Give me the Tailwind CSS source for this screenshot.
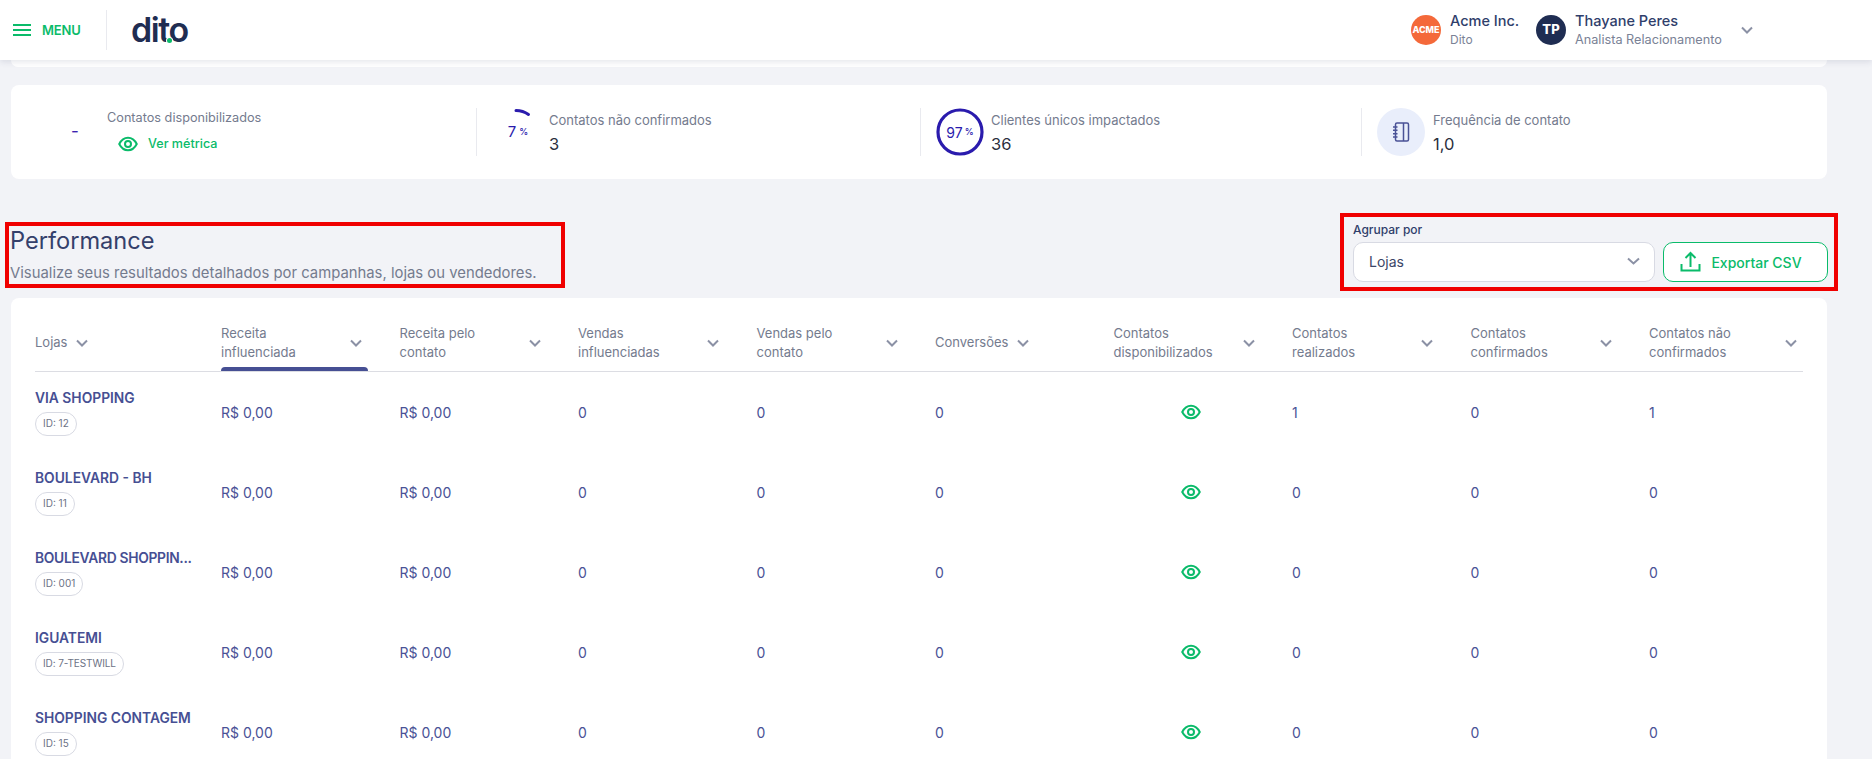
<!DOCTYPE html>
<html lang="pt-BR">
<head>
<meta charset="utf-8">
<script src="https://cdn.jsdelivr.net/npm/@tailwindcss/browser@4"></script>
<title>Performance</title>
</head>
<body class="h-[759px] overflow-hidden bg-[#f2f3f7] font-['Inter','Liberation_Sans',sans-serif]">
<header class="relative z-10 flex h-[60px] items-center bg-white pl-[13px] shadow-[0_2px_6px_rgba(40,50,90,0.12)]">
  <svg class="h-[14px] w-[18px]" viewBox="0 0 18 14" fill="none" stroke="#0abb6a" stroke-width="2"><path d="M0 2h18M0 7h18M0 12h18"/></svg>
  <span class="mt-[1px] ml-[11px] w-[40px] text-[13px] font-semibold tracking-[-0.2px] text-[#0abb6a]">MENU</span>
  <div class="ml-[24px] h-[40px] w-px bg-[#e9eaef]"></div>
  <div class="relative ml-[24px] w-[58px] text-[34px] leading-[34px] font-semibold tracking-[-1.4px] text-[#1f2d52]">dito<span class="absolute top-[25px] left-[36px] h-[5px] w-[5px] rounded-full bg-[#0abb6a] ring-1 ring-white"></span></div>
  <div class="ml-auto flex items-center pr-[119px]">
    <div class="flex h-[30px] w-[30px] items-center justify-center rounded-full bg-[#f4693a] text-[9px] font-extrabold text-white">ACME</div>
    <div class="ml-[9px] w-[86px]">
      <p class="text-[14.5px] leading-[18px] font-medium text-[#2f3e6b]">Acme Inc.</p>
      <p class="mt-[2px] text-[12px] leading-[16px] text-[#7a8296]">Dito</p>
    </div>
    <div class="flex h-[30px] w-[30px] items-center justify-center rounded-full bg-[#1f2d52] text-[13px] font-extrabold text-white">TP</div>
    <div class="ml-[9px] w-[166px]">
      <p class="text-[14.5px] leading-[18px] font-medium text-[#2f3e6b]">Thayane Peres</p>
      <p class="mt-[2px] text-[12.7px] leading-[16px] text-[#7a8296]">Analista Relacionamento</p>
    </div>
    <svg class="h-[8px] w-[12px]" viewBox="0 0 12 8" fill="none" stroke="#8b91a5" stroke-width="2"><path d="M1 1.5l5 5 5-5"/></svg>
  </div>
</header>
<div class="mx-[11px] h-[7px] w-[1816px] rounded-b-lg bg-white"></div>

<section class="mt-[18px] ml-[11px] flex h-[94px] w-[1816px] items-center rounded-lg bg-white">
  <div class="flex h-[48px] w-[465px] items-center">
    <span class="ml-[60px] w-[36px] text-[17px] text-[#3b22b0]">-</span>
    <div class="pb-[3px]">
      <p class="text-[12.7px] leading-[18px] text-[#747b8e]">Contatos disponibilizados</p>
      <div class="mt-[9px] ml-[11px] flex items-center">
        <svg class="h-[16px] w-[20px]" viewBox="0 0 24 18" fill="none" stroke="#0abb6a" stroke-width="2.4"><path d="M1.5 9C4 4 8 1.5 12 1.5S20 4 22.5 9C20 14 16 16.5 12 16.5S4 14 1.5 9z"/><circle cx="12" cy="9" r="3.6"/></svg>
        <span class="ml-[10px] text-[12.6px] leading-[16px] font-medium text-[#0abb6a]">Ver métrica</span>
      </div>
    </div>
  </div>
  <div class="flex h-[48px] w-[444px] items-center border-l border-[#e9eaef]">
    <div class="relative ml-[15px] h-[48px] w-[48px]">
      <svg class="absolute inset-0" viewBox="0 0 48 48" fill="none"><path d="M24 2.5A21.5 21.5 0 0 1 36.5 6.5" stroke="#2a1bad" stroke-width="3" stroke-linecap="round"/></svg>
      <div class="absolute inset-0 flex items-center justify-center pl-[4px] text-[#2a1bad]"><span class="text-[15px]">7</span><span class="ml-[3px] text-[9px] font-medium">%</span></div>
    </div>
    <div class="ml-[9px] pt-[2px]">
      <p class="text-[13px] leading-[18px] text-[#747b8e]">Contatos não confirmados</p>
      <p class="mt-[4px] text-[16.5px] leading-[22px] text-[#2b2f3d]">3</p>
    </div>
  </div>
  <div class="flex h-[48px] w-[441px] items-center border-l border-[#e9eaef]">
    <div class="relative ml-[15px] h-[48px] w-[48px]">
      <svg class="absolute inset-0" viewBox="0 0 48 48" fill="none"><circle cx="24" cy="24" r="22" stroke="#2a1bad" stroke-width="3.2"/></svg>
      <div class="absolute inset-0 flex items-center justify-center text-[#2a1bad]"><span class="text-[14px]">97</span><span class="ml-[2px] text-[9px] font-medium">%</span></div>
    </div>
    <div class="ml-[7px] pt-[2px]">
      <p class="text-[13px] leading-[18px] text-[#747b8e]">Clientes únicos impactados</p>
      <p class="mt-[4px] text-[16.5px] leading-[22px] text-[#2b2f3d]">36</p>
    </div>
  </div>
  <div class="flex h-[48px] items-center border-l border-[#e9eaef]">
    <div class="ml-[15px] flex h-[48px] w-[48px] items-center justify-center rounded-full bg-[#e9eefb]">
      <svg class="h-[20px] w-[18px]" viewBox="0 0 18 20" fill="none" stroke="#4a5296" stroke-width="1.5"><rect x="3.5" y="1" width="13" height="18" rx="1.5"/><path d="M11.5 1v18M1 5h4.5M1 8.3h4.5M1 11.7h4.5M1 15h4.5"/></svg>
    </div>
    <div class="ml-[8px] pt-[2px]">
      <p class="text-[13px] leading-[18px] text-[#747b8e]">Frequência de contato</p>
      <p class="mt-[4px] text-[16.5px] leading-[22px] text-[#2b2f3d]">1,0</p>
    </div>
  </div>
</section>

<section class="mt-[34px] flex items-start justify-between pr-[34px] pl-[5px]">
  <div class="mt-[9px] h-[66px] w-[560px] border-4 border-[#f00000] pl-[1px]">
    <h1 class="text-[23.6px] leading-[30px] font-normal text-[#34406b]">Performance</h1>
    <p class="mt-[7px] text-[14.85px] leading-[20px] text-[#747b8e]">Visualize seus resultados detalhados por campanhas, lojas ou vendedores.</p>
  </div>
  <div class="h-[78px] w-[498px] border-4 border-[#f00000] pt-[5px] pl-[9px]">
    <p class="text-[12px] leading-[16px] font-medium text-[#2f3e6b]">Agrupar por</p>
    <div class="mt-[4px] flex gap-[8px]">
      <div class="flex h-[40px] w-[302px] items-center justify-between rounded-[10px] border border-[#d8dae3] bg-white pr-[14px] pb-[2px] pl-[15px]">
        <span class="text-[14px] text-[#3b4668]">Lojas</span>
        <svg class="h-[8px] w-[13px]" viewBox="0 0 13 8" fill="none" stroke="#8b91a5" stroke-width="2"><path d="M1 1.5l5.5 5 5.5-5"/></svg>
      </div>
      <div class="flex h-[40px] w-[165px] items-center justify-center gap-[10px] rounded-[10px] border border-[#0abb6a] bg-white pr-[9px]">
        <svg class="h-[22px] w-[21px]" viewBox="0 0 21 22" fill="none" stroke="#0abb6a" stroke-width="2"><path d="M1.5 13v6.5h18V13M10.5 16V2M5.5 7l5-5 5 5"/></svg>
        <span class="text-[14px] font-medium text-[#0abb6a]">Exportar CSV</span>
      </div>
    </div>
  </div>
</section>

<section class="mt-[7px] ml-[11px] h-[480px] w-[1816px] overflow-hidden rounded-t-lg bg-white pt-[17px] pl-[24px]">
  <div class="grid h-[57px] w-[1768px] grid-cols-[186px_repeat(8,178.5px)_155px] border-b border-[#dcdde3] pb-[1px] text-[13px] leading-[19px] text-[#747b8e]">
    <div class="flex items-center"><span>Lojas</span><svg class="ml-[9px] h-[8px] w-[12px]" viewBox="0 0 12 8" fill="none" stroke="#8b91a5" stroke-width="2"><path d="M1 1.5l5 5 5-5"/></svg></div>
    <div class="relative flex w-[147px] items-center justify-between pr-[6px]"><span>Receita<br>influenciada</span><svg class="h-[8px] w-[12px]" viewBox="0 0 12 8" fill="none" stroke="#8b91a5" stroke-width="2"><path d="M1 1.5l5 5 5-5"/></svg><span class="absolute right-0 bottom-[-1px] left-0 h-[4px] rounded-t-sm bg-[#464f93]"></span></div>
    <div class="flex w-[147px] items-center justify-between pr-[6px]"><span>Receita pelo<br>contato</span><svg class="h-[8px] w-[12px]" viewBox="0 0 12 8" fill="none" stroke="#8b91a5" stroke-width="2"><path d="M1 1.5l5 5 5-5"/></svg></div>
    <div class="flex w-[147px] items-center justify-between pr-[6px]"><span>Vendas<br>influenciadas</span><svg class="h-[8px] w-[12px]" viewBox="0 0 12 8" fill="none" stroke="#8b91a5" stroke-width="2"><path d="M1 1.5l5 5 5-5"/></svg></div>
    <div class="flex w-[147px] items-center justify-between pr-[6px]"><span>Vendas pelo<br>contato</span><svg class="h-[8px] w-[12px]" viewBox="0 0 12 8" fill="none" stroke="#8b91a5" stroke-width="2"><path d="M1 1.5l5 5 5-5"/></svg></div>
    <div class="flex items-center"><span>Conversões</span><svg class="ml-[9px] h-[8px] w-[12px]" viewBox="0 0 12 8" fill="none" stroke="#8b91a5" stroke-width="2"><path d="M1 1.5l5 5 5-5"/></svg></div>
    <div class="flex w-[147px] items-center justify-between pr-[6px]"><span>Contatos<br>disponibilizados</span><svg class="h-[8px] w-[12px]" viewBox="0 0 12 8" fill="none" stroke="#8b91a5" stroke-width="2"><path d="M1 1.5l5 5 5-5"/></svg></div>
    <div class="flex w-[147px] items-center justify-between pr-[6px]"><span>Contatos<br>realizados</span><svg class="h-[8px] w-[12px]" viewBox="0 0 12 8" fill="none" stroke="#8b91a5" stroke-width="2"><path d="M1 1.5l5 5 5-5"/></svg></div>
    <div class="flex w-[147px] items-center justify-between pr-[6px]"><span>Contatos<br>confirmados</span><svg class="h-[8px] w-[12px]" viewBox="0 0 12 8" fill="none" stroke="#8b91a5" stroke-width="2"><path d="M1 1.5l5 5 5-5"/></svg></div>
    <div class="flex w-[154px] items-center justify-between pr-[6px]"><span>Contatos não<br>confirmados</span><svg class="h-[8px] w-[12px]" viewBox="0 0 12 8" fill="none" stroke="#8b91a5" stroke-width="2"><path d="M1 1.5l5 5 5-5"/></svg></div>
  </div>

  <div class="grid h-[80px] w-[1768px] grid-cols-[186px_repeat(8,178.5px)_155px] items-center text-[14px] text-[#4a5296]">
    <div><p class="text-[13.8px] leading-[18px] font-semibold text-[#464f93]">VIA SHOPPING</p><span class="mt-[5px] inline-flex h-[24px] items-center rounded-full border border-[#d8dae3] px-[7px] text-[10px] text-[#6c7285]">ID: 12</span></div>
    <div>R$ 0,00</div><div>R$ 0,00</div><div>0</div><div>0</div><div>0</div>
    <div class="pl-[67px]"><svg class="h-[16px] w-[20px]" viewBox="0 0 24 18" fill="none" stroke="#0abb6a" stroke-width="2.4"><path d="M1.5 9C4 4 8 1.5 12 1.5S20 4 22.5 9C20 14 16 16.5 12 16.5S4 14 1.5 9z"/><circle cx="12" cy="9" r="3.6"/></svg></div>
    <div>1</div><div>0</div><div>1</div>
  </div>
  <div class="grid h-[80px] w-[1768px] grid-cols-[186px_repeat(8,178.5px)_155px] items-center text-[14px] text-[#4a5296]">
    <div><p class="text-[13.8px] leading-[18px] font-semibold text-[#464f93]">BOULEVARD - BH</p><span class="mt-[5px] inline-flex h-[24px] items-center rounded-full border border-[#d8dae3] px-[7px] text-[10px] text-[#6c7285]">ID: 11</span></div>
    <div>R$ 0,00</div><div>R$ 0,00</div><div>0</div><div>0</div><div>0</div>
    <div class="pl-[67px]"><svg class="h-[16px] w-[20px]" viewBox="0 0 24 18" fill="none" stroke="#0abb6a" stroke-width="2.4"><path d="M1.5 9C4 4 8 1.5 12 1.5S20 4 22.5 9C20 14 16 16.5 12 16.5S4 14 1.5 9z"/><circle cx="12" cy="9" r="3.6"/></svg></div>
    <div>0</div><div>0</div><div>0</div>
  </div>
  <div class="grid h-[80px] w-[1768px] grid-cols-[186px_repeat(8,178.5px)_155px] items-center text-[14px] text-[#4a5296]">
    <div><p class="text-[13.8px] leading-[18px] font-semibold tracking-[-0.3px] whitespace-nowrap text-[#464f93]">BOULEVARD SHOPPIN...</p><span class="mt-[5px] inline-flex h-[24px] items-center rounded-full border border-[#d8dae3] px-[7px] text-[10px] text-[#6c7285]">ID: 001</span></div>
    <div>R$ 0,00</div><div>R$ 0,00</div><div>0</div><div>0</div><div>0</div>
    <div class="pl-[67px]"><svg class="h-[16px] w-[20px]" viewBox="0 0 24 18" fill="none" stroke="#0abb6a" stroke-width="2.4"><path d="M1.5 9C4 4 8 1.5 12 1.5S20 4 22.5 9C20 14 16 16.5 12 16.5S4 14 1.5 9z"/><circle cx="12" cy="9" r="3.6"/></svg></div>
    <div>0</div><div>0</div><div>0</div>
  </div>
  <div class="grid h-[80px] w-[1768px] grid-cols-[186px_repeat(8,178.5px)_155px] items-center text-[14px] text-[#4a5296]">
    <div><p class="text-[13.8px] leading-[18px] font-semibold text-[#464f93]">IGUATEMI</p><span class="mt-[5px] inline-flex h-[24px] items-center rounded-full border border-[#d8dae3] px-[7px] text-[10px] tracking-[-0.1px] text-[#6c7285]">ID: 7-TESTWILL</span></div>
    <div>R$ 0,00</div><div>R$ 0,00</div><div>0</div><div>0</div><div>0</div>
    <div class="pl-[67px]"><svg class="h-[16px] w-[20px]" viewBox="0 0 24 18" fill="none" stroke="#0abb6a" stroke-width="2.4"><path d="M1.5 9C4 4 8 1.5 12 1.5S20 4 22.5 9C20 14 16 16.5 12 16.5S4 14 1.5 9z"/><circle cx="12" cy="9" r="3.6"/></svg></div>
    <div>0</div><div>0</div><div>0</div>
  </div>
  <div class="grid h-[80px] w-[1768px] grid-cols-[186px_repeat(8,178.5px)_155px] items-center text-[14px] text-[#4a5296]">
    <div><p class="text-[13.8px] leading-[18px] font-semibold text-[#464f93]">SHOPPING CONTAGEM</p><span class="mt-[5px] inline-flex h-[24px] items-center rounded-full border border-[#d8dae3] px-[7px] text-[10px] text-[#6c7285]">ID: 15</span></div>
    <div>R$ 0,00</div><div>R$ 0,00</div><div>0</div><div>0</div><div>0</div>
    <div class="pl-[67px]"><svg class="h-[16px] w-[20px]" viewBox="0 0 24 18" fill="none" stroke="#0abb6a" stroke-width="2.4"><path d="M1.5 9C4 4 8 1.5 12 1.5S20 4 22.5 9C20 14 16 16.5 12 16.5S4 14 1.5 9z"/><circle cx="12" cy="9" r="3.6"/></svg></div>
    <div>0</div><div>0</div><div>0</div>
  </div>
</section>
</body>
</html>
